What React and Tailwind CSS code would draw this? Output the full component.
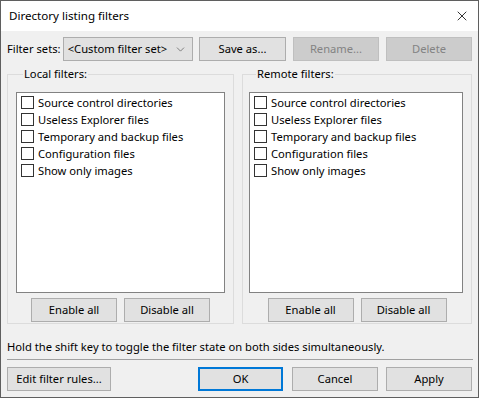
import { X, ChevronDown } from "lucide-react";

const items = [
  "Source control directories",
  "Useless Explorer files",
  "Temporary and backup files",
  "Configuration files",
  "Show only images",
];

const Btn = ({ children, className = "", disabled = false }) => (
  <button
    className={
      "h-[24px] border flex items-center justify-center whitespace-nowrap " +
      (disabled
        ? "bg-[#cccccc] border-[#bfbfbf] text-[#838383] "
        : "bg-[#e1e1e1] border-[#adadad] text-black ") +
      className
    }
  >
    {children}
  </button>
);

const FilterGroup = ({ title, className, listClass }) => (
  <fieldset className={"border border-[#dcdcdc] h-[258px] " + className}>
    <legend className="ml-[7px] px-[1px] leading-[16px]">{title}</legend>
    <div className={"mt-[10px] h-[201px] bg-white border border-[#828282] pt-[1px] " + listClass}>
      {items.map((t) => (
        <div key={t} className="flex items-center h-[17px] pl-[4px]">
          <div className="w-[13px] h-[13px] border border-[#333333] bg-white"></div>
          <span className="ml-[4px] leading-[17px]">{t}</span>
        </div>
      ))}
    </div>
    <div className="flex justify-center gap-[7px] mt-[5px]">
      <Btn className="w-[86px]">Enable all</Btn>
      <Btn className="w-[86px]">Disable all</Btn>
    </div>
  </fieldset>
);

export default function App() {
  return (
    <div className="w-[479px] h-[398px] border border-[#5f5f5f] bg-[#f0f0f0] flex flex-col text-[11.2px] text-black whitespace-nowrap font-['Segoe_UI','Noto_Sans',sans-serif]">
      <div className="h-[30px] bg-white flex items-center justify-between pl-[8px] pr-[8px]">
        <span className="text-[11.6px]">Directory listing filters</span>
        <X size={16} strokeWidth={1.2} className="text-black" />
      </div>

      <div className="flex-1 px-[6px] flex flex-col">
        <div className="flex items-center mt-[6px] h-[24px]">
          <span className="w-[56px]">Filter sets:</span>
          <div className="w-[131px] h-[24px] bg-[#e1e1e1] border border-[#adadad] flex items-center justify-between pl-[4px] pr-[5px]">
            <span>&lt;Custom filter set&gt;</span>
            <ChevronDown size={13} strokeWidth={1.3} className="text-[#555555]" />
          </div>
          <div className="flex gap-[7px] ml-[6px]">
            <Btn className="w-[87px]">Save as...</Btn>
            <Btn className="w-[86px]" disabled>Rename...</Btn>
            <Btn className="w-[86px]" disabled>Delete</Btn>
          </div>
        </div>

        <div className="flex mt-[5px] gap-[8px]">
          <FilterGroup title="Local filters:" className="w-[227px] px-[8px]" listClass="w-[209px]" />
          <FilterGroup title="Remote filters:" className="w-[231px] px-[6px]" listClass="w-[214px]" />
        </div>

        <div className="mt-[14px] h-[18px] leading-[18px]">
          Hold the shift key to toggle the filter state on both sides simultaneously.
        </div>
        <div className="mt-[3px] h-[1px] bg-[#a0a0a0] w-[466px]"></div>

        <div className="flex mt-[7px] items-center">
          <Btn className="w-[104px]">Edit filter rules...</Btn>
          <button className="ml-[87px] w-[85px] h-[24px] bg-[#e1e1e1] border-2 border-[#0078d7] flex items-center justify-center">
            OK
          </button>
          <Btn className="ml-[9px] w-[86px]">Cancel</Btn>
          <Btn className="ml-[8px] w-[86px]">Apply</Btn>
        </div>
      </div>
    </div>
  );
}
